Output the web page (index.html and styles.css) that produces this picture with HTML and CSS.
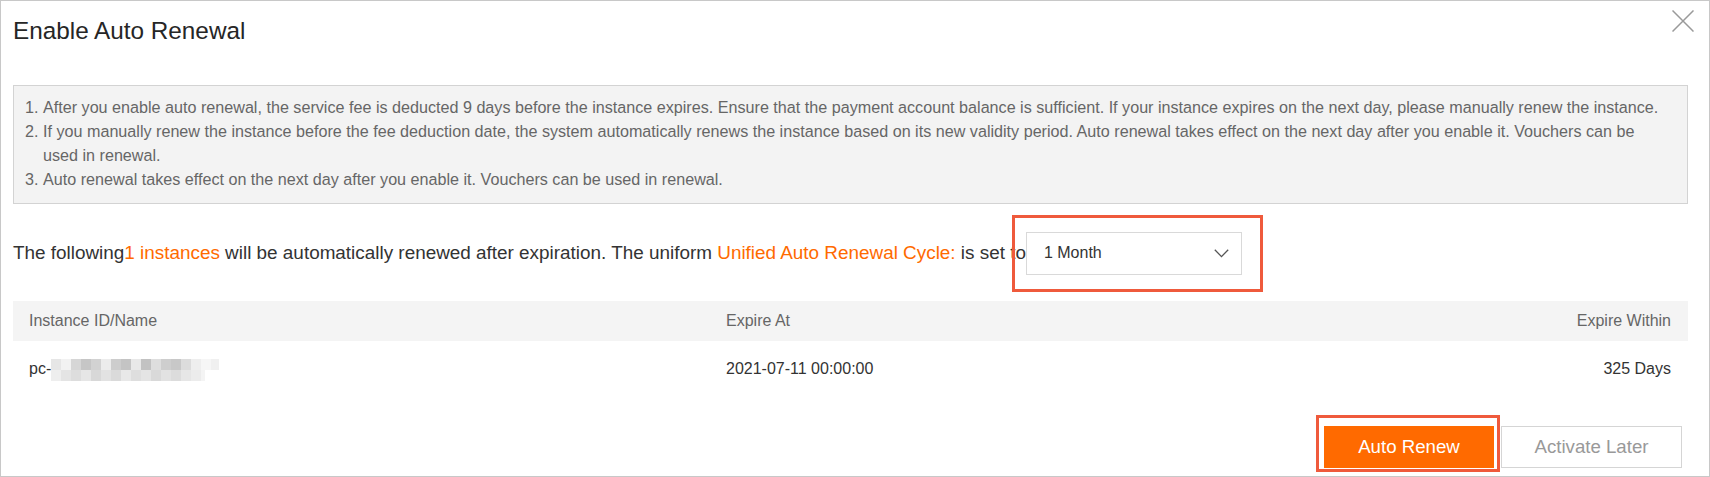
FILE: index.html
```html
<!DOCTYPE html>
<html lang="en">
<head>
<meta charset="utf-8">
<title>Enable Auto Renewal</title>
<link rel="stylesheet" href="styles.css">
</head>
<body>
<div class="dialog">
  <div class="dialog-header">
    <h1 class="title">Enable Auto Renewal</h1>
    <button class="close" aria-label="Close">
      <svg width="22" height="22" viewBox="0 0 22 22"><path d="M0.5 0.5 L21.5 21.5 M21.5 0.5 L0.5 21.5" stroke="#9a9a9a" stroke-width="1.5" fill="none"/></svg>
    </button>
  </div>

  <ol class="notice">
    <li><span class="num">1.</span><span class="txt">After you enable auto renewal, the service fee is deducted 9 days before the instance expires. Ensure that the payment account balance is sufficient. If your instance expires on the next day, please manually renew the instance.</span></li>
    <li><span class="num">2.</span><span class="txt">If you manually renew the instance before the fee deduction date, the system automatically renews the instance based on its new validity period. Auto renewal takes effect on the next day after you enable it. Vouchers can be<br>used in renewal.</span></li>
    <li><span class="num">3.</span><span class="txt">Auto renewal takes effect on the next day after you enable it. Vouchers can be used in renewal.</span></li>
  </ol>

  <div class="cycle-row">
    <span class="sentence">The following<span class="accent">1 instances</span> will be automatically renewed after expiration. The uniform <span class="accent">Unified Auto Renewal Cycle:</span> is set to</span>
    <div class="select">
      <span class="select-value">1 Month</span>
      <svg class="chevron" width="15" height="9" viewBox="0 0 15 9"><polyline points="0.8,0.8 7.5,7.6 14.2,0.8" fill="none" stroke="#555" stroke-width="1.3"/></svg>
      <span class="highlight hl-select"></span>
    </div>
  </div>

  <div class="table">
    <div class="thead">
      <div class="cell">Instance ID/Name</div>
      <div class="cell">Expire At</div>
      <div class="cell right">Expire Within</div>
    </div>
    <div class="trow">
      <div class="cell id-cell">pc-<svg class="mosaic" width="170" height="22" viewBox="0 0 170 22">
        <rect x="0" y="0" width="10" height="11" fill="#e6e6e6"/>
        <rect x="10" y="0" width="10" height="11" fill="#f2f2f2"/>
        <rect x="20" y="0" width="10" height="11" fill="#d6d6d6"/>
        <rect x="30" y="0" width="10" height="11" fill="#c6c6c6"/>
        <rect x="40" y="0" width="10" height="11" fill="#d2d2d2"/>
        <rect x="50" y="0" width="10" height="11" fill="#ececec"/>
        <rect x="60" y="0" width="10" height="11" fill="#cdcdcd"/>
        <rect x="70" y="0" width="10" height="11" fill="#c4c4c4"/>
        <rect x="80" y="0" width="10" height="11" fill="#e8e8e8"/>
        <rect x="90" y="0" width="10" height="11" fill="#c2c2c2"/>
        <rect x="100" y="0" width="10" height="11" fill="#dedede"/>
        <rect x="110" y="0" width="10" height="11" fill="#cecece"/>
        <rect x="120" y="0" width="10" height="11" fill="#c8c8c8"/>
        <rect x="130" y="0" width="10" height="11" fill="#dcdcdc"/>
        <rect x="140" y="0" width="10" height="11" fill="#eeeeee"/>
        <rect x="150" y="0" width="10" height="11" fill="#f6f6f6"/>
        <rect x="160" y="0" width="8" height="11" fill="#f0f0f0"/>
        <rect x="0" y="11" width="10" height="11" fill="#eeeeee"/>
        <rect x="10" y="11" width="10" height="11" fill="#e4e4e4"/>
        <rect x="20" y="11" width="10" height="11" fill="#dddddd"/>
        <rect x="30" y="11" width="10" height="11" fill="#e6e6e6"/>
        <rect x="40" y="11" width="10" height="11" fill="#d8d8d8"/>
        <rect x="50" y="11" width="10" height="11" fill="#e2e2e2"/>
        <rect x="60" y="11" width="10" height="11" fill="#dadada"/>
        <rect x="70" y="11" width="10" height="11" fill="#e8e8e8"/>
        <rect x="80" y="11" width="10" height="11" fill="#dedede"/>
        <rect x="90" y="11" width="10" height="11" fill="#e4e4e4"/>
        <rect x="100" y="11" width="10" height="11" fill="#d9d9d9"/>
        <rect x="110" y="11" width="10" height="11" fill="#e2e2e2"/>
        <rect x="120" y="11" width="10" height="11" fill="#dcdcdc"/>
        <rect x="130" y="11" width="10" height="11" fill="#e6e6e6"/>
        <rect x="140" y="11" width="10" height="11" fill="#ececec"/>
        <rect x="150" y="11" width="4" height="11" fill="#f4f4f4"/>
      </svg></div>
      <div class="cell">2021-07-11 00:00:00</div>
      <div class="cell right">325 Days</div>
    </div>
  </div>

  <div class="footer">
    <div class="btn-wrap">
      <button class="btn btn-primary">Auto Renew</button>
      <span class="highlight hl-button"></span>
    </div>
    <button class="btn btn-secondary">Activate Later</button>
  </div>
</div>
</body>
</html>
```

FILE: styles.css
```css
* { box-sizing: border-box; }

html, body {
  margin: 0;
  padding: 0;
  background: #ffffff;
}

body {
  font-family: "Liberation Sans", Arial, sans-serif;
  color: #333333;
}

.dialog {
  position: relative;
  width: 1710px;
  height: 477px;
  border: 1px solid #c8c8c8;
  padding: 0 21px 0 12px;
  background: #ffffff;
  overflow: hidden;
}

.dialog-header {
  padding-top: 18px;
}

.title {
  margin: 0;
  font-size: 24.3px;
  line-height: 24px;
  font-weight: normal;
  color: #262626;
}

.close {
  position: absolute;
  top: 9px;
  right: 15px;
  width: 22px;
  height: 22px;
  padding: 0;
  border: 0;
  background: transparent;
  display: flex;
}

.notice {
  margin: 42px 0 0 0;
  list-style: none;
  border: 1px solid #d3d3d3;
  background: #f3f3f3;
  padding: 9px 10px 12px 11px;
  font-size: 16.15px;
  line-height: 24px;
  color: #666666;
}

.notice li {
  display: flex;
  white-space: nowrap;
}

.notice .num {
  flex: 0 0 18px;
}

.cycle-row {
  margin-top: 28px;
  display: flex;
  align-items: center;
  height: 42px;
}

.sentence {
  font-size: 18.9px;
  color: #333333;
  white-space: nowrap;
}

.accent {
  color: #ff6a00;
}

.select {
  position: relative;
  width: 216px;
  height: 43px;
  border: 1px solid #d9d9d9;
  background: #ffffff;
  display: flex;
  align-items: center;
  justify-content: space-between;
  padding: 0 12px 0 17px;
  font-size: 16px;
  color: #333333;
}

.highlight {
  position: absolute;
  border: 3px solid #ef5a3c;
  pointer-events: none;
}

.hl-select {
  left: -15px;
  right: -22px;
  top: -18px;
  bottom: -18px;
}

.table {
  margin-top: 27px;
  font-size: 16px;
}

.thead,
.trow {
  display: grid;
  grid-template-columns: 697px 1fr auto;
  align-items: center;
}

.thead {
  height: 40px;
  background: #f4f4f4;
  color: #666666;
}

.trow {
  height: 56px;
  color: #333333;
}

.cell {
  padding: 0 16px;
  white-space: nowrap;
}

.cell.right {
  text-align: right;
  padding-right: 17px;
}

.id-cell {
  display: flex;
  align-items: center;
}

.mosaic {
  display: block;
  margin-top: 1px;
}

.footer {
  margin-top: 29px;
  display: flex;
  justify-content: flex-end;
  gap: 7px;
  padding-right: 6px;
}

.btn-wrap {
  position: relative;
  display: flex;
}

.btn {
  height: 42px;
  font-family: "Liberation Sans", Arial, sans-serif;
  font-size: 18.67px;
  padding: 0;
  cursor: pointer;
}

.btn-primary {
  width: 170px;
  border: 0;
  background: #ff6a00;
  color: #ffffff;
}

.btn-secondary {
  width: 181px;
  border: 1px solid #d5d5d5;
  background: #ffffff;
  color: #999999;
}

.hl-button {
  left: -8px;
  right: -6px;
  top: -11px;
  bottom: -4px;
}
```
